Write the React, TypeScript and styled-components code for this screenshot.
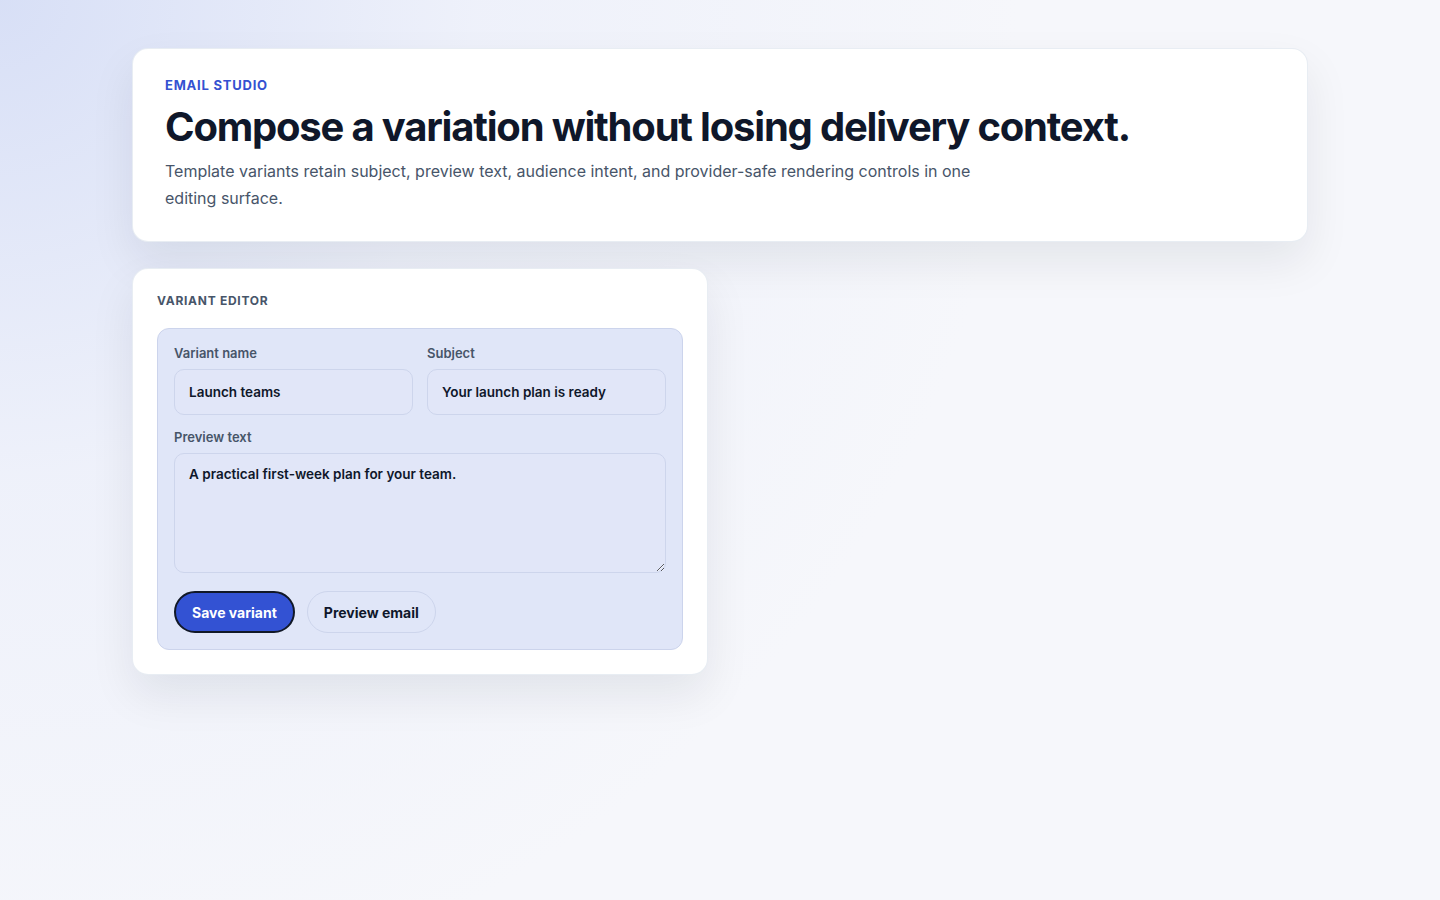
import React from "react";
import styled, { createGlobalStyle } from "styled-components";

const GlobalStyle = createGlobalStyle`
  * { box-sizing: border-box; }
  html, body { margin: 0; padding: 0; }
  body {
    min-height: 100vh;
    font-family: Inter, "Noto Sans", sans-serif;
    color: #0f172a;
    background:
      radial-gradient(circle at 0% 0%, rgba(214, 222, 246, 0.95) 0%, rgba(233, 237, 250, 0.6) 28%, rgba(247, 248, 252, 0) 60%),
      #f6f7fb;
  }
`;

const Page = styled.main`
  max-width: 1176px;
  margin: 0 auto;
  padding: 48px 0;
  display: flex;
  flex-direction: column;
  gap: 26px;
`;

const Card = styled.section<{ $pad?: string }>`
  background: #ffffff;
  border: 1px solid rgba(226, 232, 240, 0.8);
  border-radius: 16px;
  padding: ${(p) => p.$pad ?? "28px 32px 29px"};
  box-shadow: 0 20px 45px rgba(15, 23, 42, 0.08);
  min-width: 0;
`;

const Eyebrow = styled.div`
  font-size: 13px;
  line-height: 16px;
  font-weight: 700;
  letter-spacing: 0.06em;
  text-transform: uppercase;
  color: #3451d1;
`;

const Title = styled.h1`
  margin: 12px 0 9px;
  font-size: 40px;
  line-height: 44px;
  font-weight: 700;
  letter-spacing: -0.03em;
  color: #0f172a;
`;

const Lead = styled.p`
  margin: 0;
  max-width: 820px;
  font-size: 16px;
  line-height: 27px;
  color: #475569;
`;

const Grid = styled.div`
  display: grid;
  grid-template-columns: minmax(0, 1fr) minmax(0, 1fr);
  gap: 24px;
  align-items: start;
`;

const SectionLabel = styled.h2`
  margin: 0 0 20px;
  font-size: 12px;
  line-height: 15px;
  font-weight: 700;
  letter-spacing: 0.06em;
  text-transform: uppercase;
  color: #475569;
`;

const Panel = styled.form`
  background: #e0e6f8;
  border: 1px solid #ccd4ec;
  border-radius: 12px;
  padding: 16px;
  display: flex;
  flex-direction: column;
  gap: 14px;
`;

const Row = styled.div`
  display: grid;
  grid-template-columns: minmax(0, 1fr) minmax(0, 1fr);
  gap: 14px;
`;

const Field = styled.label`
  display: flex;
  flex-direction: column;
  gap: 8px;
  min-width: 0;
`;

const FieldLabel = styled.span`
  font-size: 13px;
  font-weight: 600;
  color: #475569;
`;

const Input = styled.input`
  width: 100%;
  min-width: 0;
  height: 46px;
  padding: 0 14px;
  border: 1px solid #cdd5ec;
  border-radius: 10px;
  background: #e1e6f8;
  font-family: Inter, "Noto Sans", sans-serif;
  font-size: 13.5px;
  font-weight: 600;
  color: #0f172a;
  outline: none;
`;

const TextArea = styled.textarea`
  width: 100%;
  height: 120px;
  padding: 10px 14px;
  border: 1px solid #cdd5ec;
  border-radius: 10px;
  background: #e1e6f8;
  font-family: Inter, "Noto Sans", sans-serif;
  font-size: 13.5px;
  font-weight: 600;
  line-height: 20px;
  color: #0f172a;
  resize: vertical;
  outline: none;
`;

const Actions = styled.div`
  display: flex;
  gap: 12px;
  margin-top: 4px;
`;

const Button = styled.button<{ $primary?: boolean }>`
  height: 42px;
  padding: 0 16px;
  border-radius: 999px;
  font-family: Inter, "Noto Sans", sans-serif;
  font-size: 14px;
  font-weight: 700;
  cursor: pointer;
  border: ${(p) => (p.$primary ? "2px solid #111827" : "1px solid #cdd5ec")};
  background: ${(p) => (p.$primary ? "#3352d3" : "transparent")};
  color: ${(p) => (p.$primary ? "#ffffff" : "#0f172a")};
`;

export default function App() {
  return (
    <>
      <GlobalStyle />
      <Page>
        <Card>
          <Eyebrow>Email studio</Eyebrow>
          <Title>Compose a variation without losing delivery context.</Title>
          <Lead>
            Template variants retain subject, preview text, audience intent, and
            provider-safe rendering controls in one editing surface.
          </Lead>
        </Card>
        <Grid>
          <Card $pad="24px">
            <SectionLabel>Variant editor</SectionLabel>
            <Panel onSubmit={(e) => e.preventDefault()}>
              <Row>
                <Field>
                  <FieldLabel>Variant name</FieldLabel>
                  <Input defaultValue="Launch teams" />
                </Field>
                <Field>
                  <FieldLabel>Subject</FieldLabel>
                  <Input defaultValue="Your launch plan is ready" />
                </Field>
              </Row>
              <Field>
                <FieldLabel>Preview text</FieldLabel>
                <TextArea defaultValue="A practical first-week plan for your team." />
              </Field>
              <Actions>
                <Button $primary type="submit">Save variant</Button>
                <Button type="button">Preview email</Button>
              </Actions>
            </Panel>
          </Card>
        </Grid>
      </Page>
    </>
  );
}
